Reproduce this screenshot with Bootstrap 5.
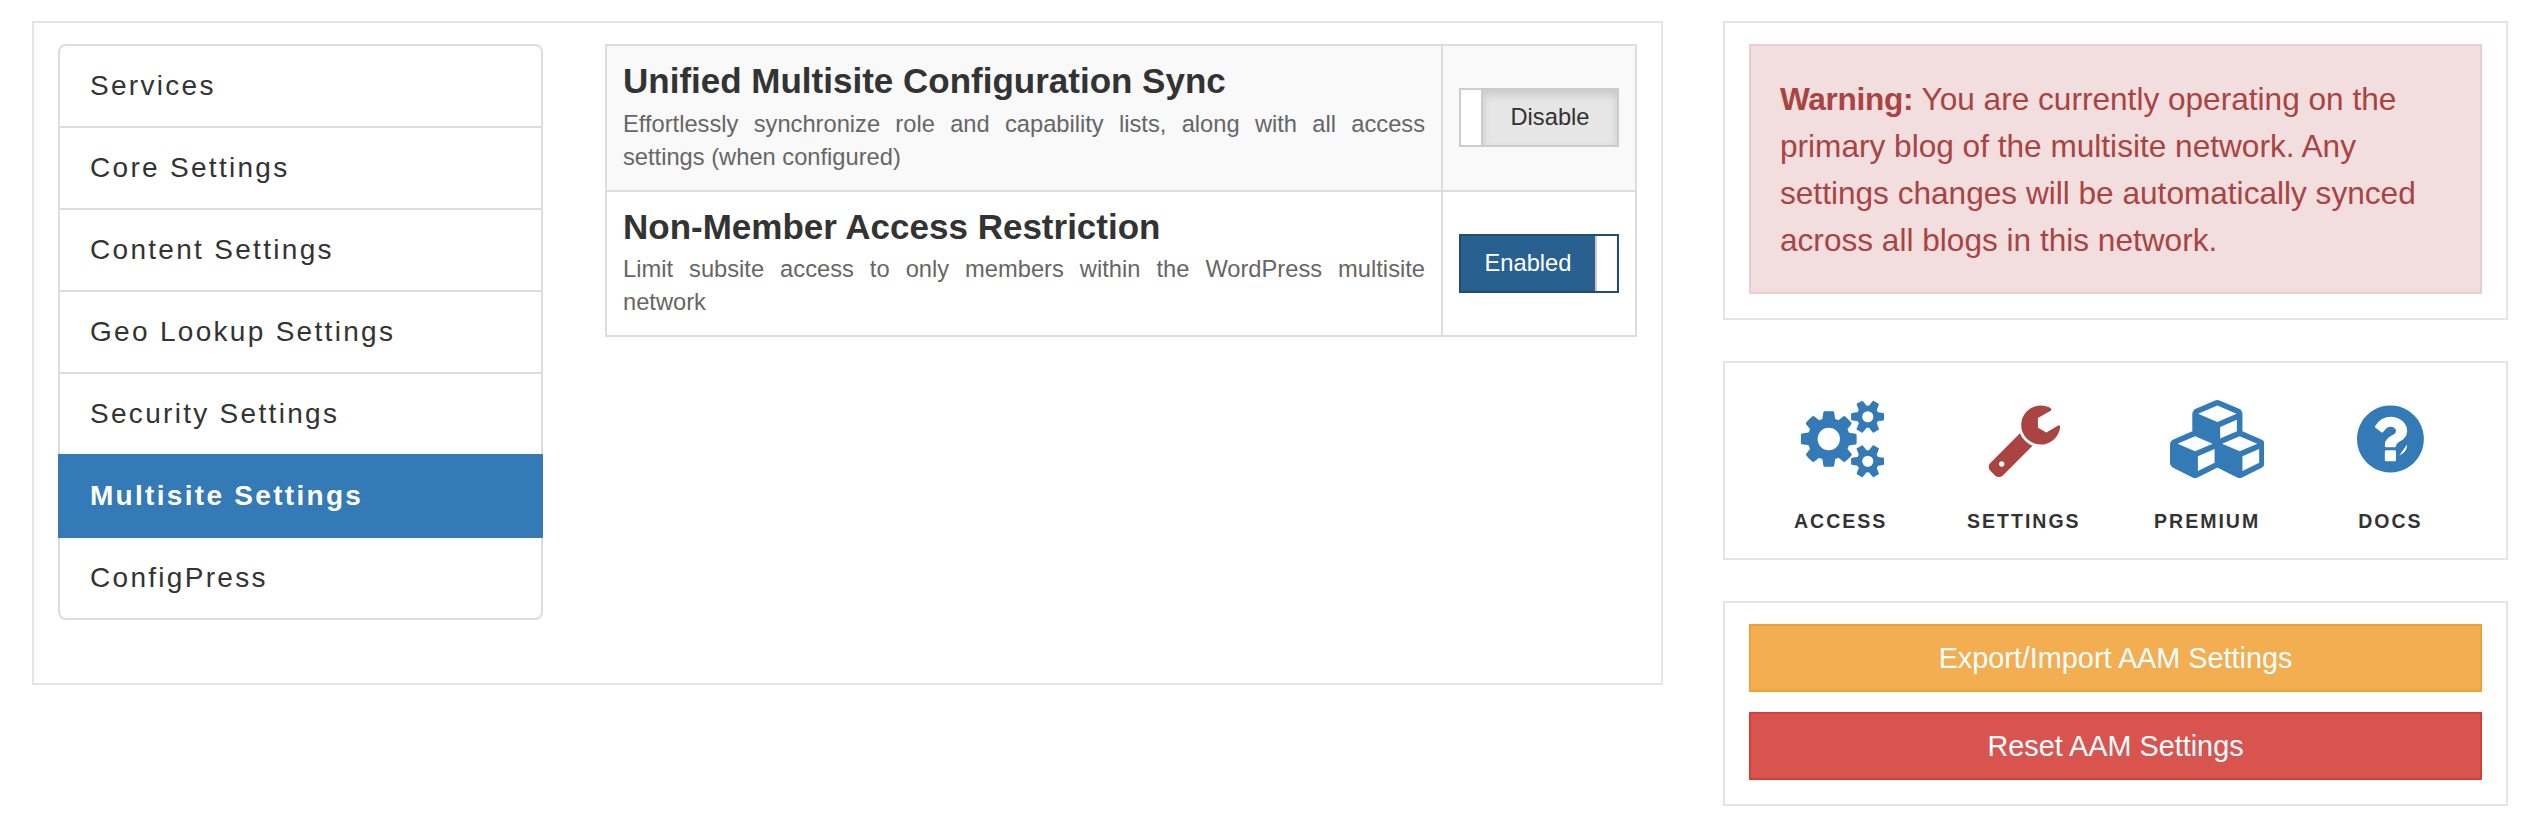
<!DOCTYPE html>
<html lang="en">
<head>
<meta charset="utf-8">
<title>AAM Multisite Settings</title>
<link href="https://cdn.jsdelivr.net/npm/bootstrap@5.3.0/dist/css/bootstrap.min.css" rel="stylesheet">
<style>
body{font-family:"Liberation Sans",Arial,sans-serif;color:#333;background:#fff;}
.page-wrap{padding:21px 34px 0 32px;gap:60px;align-items:flex-start;}
.panel-box{border:2px solid #e5e5e5;background:#fff;padding:21px 24px 24px;}
.main-panel{flex:1 1 auto;min-width:0;padding-bottom:63px;gap:62px;}
.side-col{flex:0 0 785px;width:785px;gap:41px;}
.menu-list{flex:0 0 485px;--bs-list-group-border-width:2px;--bs-list-group-border-color:#ddd;--bs-list-group-border-radius:8px;--bs-list-group-item-padding-x:30px;--bs-list-group-item-padding-y:20px;--bs-list-group-color:#333;--bs-list-group-action-color:#333;--bs-list-group-active-bg:#337ab7;--bs-list-group-active-border-color:#337ab7;--bs-list-group-active-color:#fff;}
.menu-list .list-group-item{font-size:28px;line-height:40px;letter-spacing:2.3px;}
.menu-list .list-group-item.active{font-weight:700;}
.opt-table{flex:1 1 auto;table-layout:fixed;border-collapse:collapse;margin:0;--bs-table-bg:transparent;}
.opt-table td{border:2px solid #ddd;vertical-align:middle;}
.opt-table tr.shaded td{background:#f9f9f9;}
.opt-table td.opt-main{padding:13px 16px 16px;}
.opt-table td.opt-side{width:194px;padding:0 14px 0 16px;}
.opt-title{font-size:35px;line-height:44px;font-weight:700;color:#333;margin:0 0 4.5px;}
.opt-desc{font-size:23.7px;line-height:33px;color:#666;text-align:justify;}
.toggle-box{width:160px;height:59px;font-size:23.7px;}
.toggle-off{border:2px solid #ccc;color:#333;}
.toggle-off .toggle-face{background:#e6e6e6;box-shadow:inset 0 5px 8px rgba(0,0,0,.125);padding-top:1px;}
.toggle-off .toggle-grip{background:#fff;border-right:2px solid #ccc;flex:0 0 22px;}
.toggle-on{border:2px solid #204d74;color:#fff;}
.toggle-on .toggle-face{background:#286090;padding-top:1px;}
.toggle-on .toggle-grip{background:#fff;border-left:2px solid #ccc;flex:0 0 22px;}
.warn-box{background:#f2dede;border:2px solid #ebccd1;color:#a94442;border-radius:0;font-size:31.6px;line-height:47px;padding:30px 29px 28px;margin:0;}
.warn-box strong{letter-spacing:-.3px;}
.nav-label{font-size:19.5px;line-height:30px;font-weight:700;letter-spacing:2px;color:#333;text-transform:uppercase;}
.panel-box.icon-row{padding-top:37px;padding-bottom:22px;}
.icon-glyph{height:78px;margin-bottom:28px;display:block;}
.icon-blue{fill:#337ab7;}
.icon-red{fill:#a94442;}
.act-btn{border-radius:0;border-width:2px;border-style:solid;height:68px;font-size:28.8px;line-height:1;color:#fff;display:flex;align-items:center;justify-content:center;}
.act-warn{background:#f2ae50;border-color:#eea236;}
.act-danger{background:#d9534f;border-color:#d43f3a;}
.act-stack{gap:20px;}
</style>
</head>
<body>
<div class="d-flex page-wrap">
  <div class="panel-box main-panel d-flex align-items-start">
    <div class="list-group menu-list">
      <a href="#" class="list-group-item list-group-item-action">Services</a>
      <a href="#" class="list-group-item list-group-item-action">Core Settings</a>
      <a href="#" class="list-group-item list-group-item-action">Content Settings</a>
      <a href="#" class="list-group-item list-group-item-action">Geo Lookup Settings</a>
      <a href="#" class="list-group-item list-group-item-action">Security Settings</a>
      <a href="#" class="list-group-item list-group-item-action active">Multisite Settings</a>
      <a href="#" class="list-group-item list-group-item-action">ConfigPress</a>
    </div>
    <table class="table opt-table">
      <tbody>
        <tr class="shaded">
          <td class="opt-main">
            <div class="opt-title">Unified Multisite Configuration Sync</div>
            <div class="opt-desc">Effortlessly synchronize role and capability lists, along with all access settings (when configured)</div>
          </td>
          <td class="opt-side">
            <div class="toggle-box toggle-off d-flex">
              <span class="toggle-grip"></span>
              <span class="toggle-face flex-grow-1 d-flex align-items-center justify-content-center">Disable</span>
            </div>
          </td>
        </tr>
        <tr>
          <td class="opt-main">
            <div class="opt-title">Non-Member Access Restriction</div>
            <div class="opt-desc">Limit subsite access to only members within the WordPress multisite network</div>
          </td>
          <td class="opt-side">
            <div class="toggle-box toggle-on d-flex">
              <span class="toggle-face flex-grow-1 d-flex align-items-center justify-content-center">Enabled</span>
              <span class="toggle-grip"></span>
            </div>
          </td>
        </tr>
      </tbody>
    </table>
  </div>
  <div class="side-col d-flex flex-column">
    <div class="panel-box">
      <div class="alert warn-box" role="alert"><strong>Warning:</strong> You are currently operating on the primary blog of the multisite network. Any settings changes will be automatically synced across all blogs in this network.</div>
    </div>
    <div class="panel-box icon-row">
      <div class="row g-0 text-center">
        <div class="col-3 d-flex flex-column align-items-center">
          <svg class="icon-glyph icon-blue" viewBox="-90 0 2010 1792" aria-hidden="true"><path d="M896 896q0-106-75-181t-181-75-181 75-75 181 75 181 181 75 181-75 75-181zm768 512q0-52-38-90t-90-38-90 38-38 90q0 53 37.5 90.5t90.5 37.5 90.5-37.5 37.5-90.5zm0-1024q0-52-38-90t-90-38-90 38-38 90q0 53 37.5 90.5t90.5 37.5 90.5-37.5 37.5-90.5zm-384 421v185q0 10-7 19.5t-16 10.5l-155 24q-11 35-32 76 34 48 90 115 7 11 7 20 0 12-7 19-23 30-82.5 89.5t-78.5 59.5q-11 0-21-7l-115-90q-37 19-77 31-11 108-23 155-7 24-30 24h-186q-11 0-20-7.5t-10-17.5l-23-153q-34-10-75-31l-118 89q-7 7-20 7-11 0-21-8-144-133-144-160 0-9 7-19 10-14 41-53t47-61q-23-44-35-82l-152-24q-10-1-17-9.5t-7-19.5v-185q0-10 7-19.5t16-10.5l155-24q11-35 32-76-34-48-90-115-7-11-7-20 0-12 7-20 22-30 82-89t79-59q11 0 21 7l115 90q34-18 77-32 11-108 23-154 7-24 30-24h186q11 0 20 7.5t10 17.5l23 153q34 10 75 31l118-89q8-7 20-7 11 0 21 8 144 133 144 160 0 8-7 19-12 16-42 54t-45 60q23 48 34 82l152 23q10 2 17 10.5t7 19.5zm640 533v140q0 16-149 31-12 27-30 52 51 113 51 138 0 4-4 7-122 71-124 71-8 0-46-47t-52-68q-20 2-30 2t-30-2q-14 21-52 68t-46 47q-2 0-124-71-4-3-4-7 0-25 51-138-18-25-30-52-149-15-149-31v-140q0-16 149-31 13-29 30-52-51-113-51-138 0-4 4-7 4-2 35-20t59-34 30-16q8 0 46 46.5t52 67.5q20-2 30-2t30 2q51-71 92-112l6-2q4 0 124 70 4 3 4 7 0 25-51 138 17 23 30 52 149 15 149 31zm0-1024v140q0 16-149 31-12 27-30 52 51 113 51 138 0 4-4 7-122 71-124 71-8 0-46-47t-52-68q-20 2-30 2t-30-2q-14 21-52 68t-46 47q-2 0-124-71-4-3-4-7 0-25 51-138-18-25-30-52-149-15-149-31v-140q0-16 149-31 13-29 30-52-51-113-51-138 0-4 4-7 4-2 35-20t59-34 30-16q8 0 46 46.5t52 67.5q20-2 30-2t30 2q51-71 92-112l6-2q4 0 124 70 4 3 4 7 0 25-51 138 17 23 30 52 149 15 149 31z"/></svg>
          <span class="nav-label">Access</span>
        </div>
        <div class="col-3 d-flex flex-column align-items-center">
          <svg class="icon-glyph icon-red" viewBox="0 0 1792 1792" aria-hidden="true"><path d="M448 1472q0-26-19-45t-45-19-45 19-19 45 19 45 45 19 45-19 19-45zm644-420l-682 682q-37 37-90 37-52 0-91-37l-106-108q-38-36-38-90 0-53 38-91l681-681q39 98 114.5 173.5t173.5 114.5zm634-435q0 39-23 106-47 134-164.5 217.5t-258.5 83.5q-185 0-316.5-131.5t-131.5-316.5 131.5-316.5 316.5-131.5q58 0 121.5 16.5t107.5 46.5q16 11 16 28t-16 28l-293 169v224l193 107q5-3 79-48.5t135.5-81 70.5-35.5q15 0 23.5 10t8.5 25z"/></svg>
          <span class="nav-label">Settings</span>
        </div>
        <div class="col-3 d-flex flex-column align-items-center">
          <svg class="icon-glyph icon-blue" viewBox="-460 0 2636 1792" aria-hidden="true"><path d="M640 1632l384-192v-314l-384 164v342zm-64-454l404-173-404-173-404 173zm1088 454l384-192v-314l-384 164v342zm-64-454l404-173-404-173-404 173zm-448-293l384-165v-266l-384 164v267zm-64-379l441-189-441-189-441 189zm1088 518v416q0 36-19 67t-52 47l-448 224q-25 14-57 14t-57-14l-448-224q-4-2-7-4-2 2-7 4l-448 224q-25 14-57 14t-57-14l-448-224q-33-16-52-47t-19-67v-416q0-38 21.5-70t56.5-48l434-186v-400q0-38 21.5-70t56.5-48l448-192q23-10 50-10t50 10l448 192q35 16 56.5 48t21.5 70v400l434 186q36 16 57 48t21 70z"/></svg>
          <span class="nav-label">Premium</span>
        </div>
        <div class="col-3 d-flex flex-column align-items-center">
          <svg class="icon-glyph icon-blue" viewBox="0 0 1536 1792" aria-hidden="true"><path d="M896 1376v-192q0-14-9-23t-23-9h-192q-14 0-23 9t-9 23v192q0 14 9 23t23 9h192q14 0 23-9t9-23q0-19 21.5-49.5t54.5-49.5q32-18 49-28.5t46-35 44.5-48 28-60.5 12.5-81zm256-672q0-88-55.5-163t-138.5-116-170-41q-243 0-371 213-15 24 8 42l132 100q7 6 19 6 16 0 25-12 53-68 86-92 34-24 86-24 48 0 85.5 26t37.5 59q0 38-20 61t-68 45q-63 28-115.5 86.5t-52.5 125.5v36q0 14 9 23t23 9h192q14 0 23-9t9-23q0-19 21.5-49.5t54.5-49.5q32-18 49-28.5t46-35 44.5-48 28-60.5 12.5-81zm384 192q0 209-103 385.5t-279.5 279.5-385.5 103-385.5-103-279.5-279.5-103-385.5 103-385.5 279.5-279.5 385.5-103 385.5 103 279.5 279.5 103 385.5z"/></svg>
          <span class="nav-label">Docs</span>
        </div>
      </div>
    </div>
    <div class="panel-box">
      <div class="d-flex flex-column act-stack">
        <a href="#" class="btn act-btn act-warn">Export/Import AAM Settings</a>
        <a href="#" class="btn act-btn act-danger">Reset AAM Settings</a>
      </div>
    </div>
  </div>
</div>
<script src="https://cdn.jsdelivr.net/npm/bootstrap@5.3.0/dist/js/bootstrap.bundle.min.js"></script>
</body>
</html>
